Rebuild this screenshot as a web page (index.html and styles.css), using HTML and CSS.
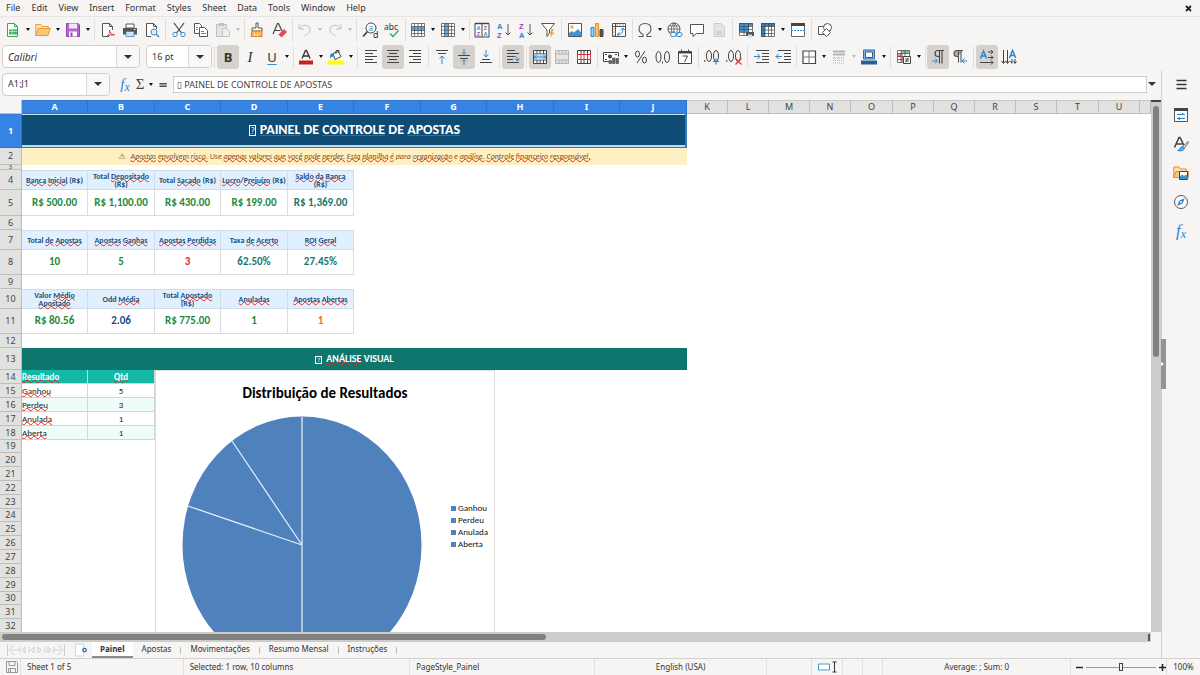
FILE: index.html
```html
<!DOCTYPE html>
<html lang="pt-BR">
<head>
<meta charset="utf-8">
<title>Painel de Controle de Apostas</title>
<link rel="stylesheet" href="styles.css">
</head>
<body>
<header class="top">
  <nav class="menubar" aria-label="Menu">
    <button>File</button><button>Edit</button><button>View</button><button>Insert</button><button>Format</button><button>Styles</button><button>Sheet</button><button>Data</button><button>Tools</button><button>Window</button><button>Help</button>
    <button class="close" aria-label="Close document"><svg width="7" height="7" viewBox="0 0 7 7"><path d="M1 1l5 5M6 1L1 6" stroke="#222" stroke-width="1.8"/></svg></button>
  </nav>

  <div class="toolbar" role="toolbar" aria-label="Standard">
    <button class="tool" aria-label="New"><svg viewBox="0 0 16 16"><path d="M2.500 1.500h7l3 3v10h-10z" fill="#fff" stroke="#3aa655"/><path d="M9.500 1.500v3h3" fill="none" stroke="#3aa655"/><path d="M4 7.500h8v5H4z" fill="#43b15f"/><path d="M4 9.500h8M7 7.500v5" stroke="#d8f0dd" stroke-width=".7"/></svg></button><button class="caret" aria-label="New options"></button>
    <button class="tool" aria-label="Open"><svg viewBox="0 0 16 16"><path d="M.8 13.500V2.500h5l1.500 2h6v3" fill="#fbe3b8" stroke="#e79a3c"/><path d="M.8 13.500l2.500-7h12l-2.300 7z" fill="#fbc878" stroke="#e79a3c"/></svg></button><button class="caret" aria-label="Open options"></button>
    <button class="tool" aria-label="Save"><svg viewBox="0 0 16 16"><path d="M1.500 1.500h11.500l1.500 1.500v11.500h-13z" fill="#b066c9" stroke="#9243af"/><path d="M4 1.500h8v5H4z" fill="#f3e6f7"/><path d="M4 9.500h8v5H4z" fill="#fff"/><path d="M5.500 10.500h2v4h-2z" fill="#9243af"/></svg></button><button class="caret" aria-label="Save options"></button>
    <span class="sep"></span>
    <button class="tool" aria-label="Export as PDF"><svg viewBox="0 0 16 16"><path d="M9 14.500H2.500v-13h7l3 3V8" fill="#fff" stroke="#555"/><path d="M9.500 1.500v3h3" fill="none" stroke="#555"/><path d="M7 14c3-2 3-4 2.500-6 .5 3 2 4.500 5 5-3-.3-5 0-7.500 1z" fill="none" stroke="#e0313d"/></svg></button>
    <button class="tool" aria-label="Print"><svg viewBox="0 0 16 16"><path d="M4 2h8v4H4z" fill="#fff" stroke="#555"/><path d="M1 6h14v6.500H1z" fill="#555"/><path d="M4 9.500h8v5H4z" fill="#cfe4f6" stroke="#3a83c4" stroke-width=".8"/><path d="M12 7.500h1.500" stroke="#fff"/></svg></button>
    <button class="tool" aria-label="Print preview"><svg viewBox="0 0 16 16"><path d="M7 14.500H2.500v-13h7l3 3V7" fill="#fff" stroke="#555"/><path d="M9.500 1.500v3h3" fill="none" stroke="#555"/><circle cx="10" cy="10" r="3" fill="#d9edfb" stroke="#3d8fd1"/><path d="M12 12l3 3" stroke="#3d8fd1" stroke-width="1.500"/></svg></button>
    <span class="sep"></span>
    <button class="tool" aria-label="Cut"><svg viewBox="0 0 16 16"><path d="M3 1l7.500 10M13 1L5.500 11" stroke="#444" stroke-width="1.200" fill="none"/><circle cx="4" cy="12.500" r="2.200" fill="none" stroke="#3d8fd1"/><circle cx="12" cy="12.500" r="2.200" fill="none" stroke="#3d8fd1"/></svg></button>
    <button class="tool" aria-label="Copy"><svg viewBox="0 0 16 16"><path d="M1.500 1.500h5l2 2v8h-7z" fill="#fff" stroke="#555"/><path d="M6.500 5.500h5l3 3v6h-8z" fill="#fff" stroke="#555"/><path d="M8 9.500h3M8 11.500h5M3 5.500h2M3 7.500h2" stroke="#3d8fd1"/></svg></button>
    <button class="tool off" aria-label="Paste"><svg viewBox="0 0 16 16"><path d="M1.500 2.500h10v12h-10z" fill="#ddd" stroke="#aaa"/><path d="M4 1h5v3H4z" fill="#aaa"/><path d="M7.500 6.500h4l3 3v5h-7z" fill="#eee" stroke="#aaa"/></svg></button><button class="caret off" aria-label="Paste options"></button>
    <span class="sep tight"></span>
    <button class="tool" aria-label="Clone formatting"><svg viewBox="0 0 16 16"><path d="M7 1h2v5h4v3H3V6h4z" fill="#fff" stroke="#555"/><path d="M3 9h10v5.500H2z" fill="#fbb65b" stroke="#d98322"/><path d="M5.500 11.500v3M8.500 11.500v3" stroke="#fff" stroke-width=".8"/></svg></button>
    <button class="tool" aria-label="Clear formatting"><svg viewBox="0 0 16 16"><path d="M2 12L6.500 1.500h1L11 9M3.500 8.500h6" fill="none" stroke="#444" stroke-width="1.200"/><path d="M8 12.500l5-5 2.500 2.500-5 5z" fill="#e84855" stroke="#c62b3a" stroke-width=".7"/></svg></button>
    <span class="sep tight"></span>
    <button class="tool off" aria-label="Undo"><svg viewBox="0 0 16 16"><path d="M2 2v5h5M2.500 6.500C6 1 14 3 13 8.500 12.500 11 10 12 7.500 14" fill="none" stroke="#aaa"/></svg></button><button class="caret off" aria-label="Undo options"></button>
    <button class="tool off" aria-label="Redo"><svg viewBox="0 0 16 16"><path d="M14 2v5H9M13.500 6.500C10 1 2 3 3 8.500 3.500 11 6 12 8.500 14" fill="none" stroke="#aaa"/></svg></button><button class="caret off" aria-label="Redo options"></button>
    <span class="sep"></span>
    <button class="tool" aria-label="Find and replace"><svg viewBox="0 0 16 16"><circle cx="9" cy="6" r="5" fill="#fff" stroke="#444"/><path d="M5.500 9.500L1 14.500" stroke="#444" stroke-width="1.800"/><text x="6.500" y="8.500" font-size="8" fill="#2c86d0">a</text><text x="11" y="15.500" font-size="9" fill="#333">d</text></svg></button>
    <button class="tool" aria-label="Spelling"><svg viewBox="0 0 16 16"><text x="0" y="7.500" font-size="8.500" fill="#333">abc</text><path d="M6 11.500l3 3 5.500-6" fill="none" stroke="#35a556" stroke-width="1.300"/></svg></button>
    <span class="sep tight"></span>
    <button class="tool" aria-label="Row"><svg viewBox="0 0 16 16"><path d="M1.500 1.500h13v13h-13z" fill="#fff"/><path d="M1 4.500h14v4H1z" fill="#59aaea"/><path d="M1.500 1.500h13v13h-13zM1.500 4.500h13M1.500 8.500h13M1.500 11.500h13M4.500 1.500v13M8 1.500v13M11.500 1.500v13" fill="none" stroke="#555" stroke-width=".8"/></svg></button><button class="caret" aria-label="Row options"></button>
    <button class="tool" aria-label="Column"><svg viewBox="0 0 16 16"><path d="M1.500 1.500h13v13h-13z" fill="#fff"/><path d="M4.500 1h4v14h-4z" fill="#59aaea"/><path d="M1.500 1.500h13v13h-13zM1.500 4.500h13M1.500 8h13M1.500 11.500h13M4.500 1.500v13M8.500 1.500v13M11.500 1.500v13" fill="none" stroke="#555" stroke-width=".8"/></svg></button><button class="caret" aria-label="Column options"></button>
    <span class="sep tight"></span>
    <button class="tool" aria-label="Sort"><svg viewBox="0 0 16 16"><path d="M1 1.500h14v13.500H1zM8 1v14" fill="#fff" stroke="#444"/><path d="M1 1.500h14" stroke="#444" stroke-width="1.500"/><g class="az" font-size="5.500"><text x="2.600" y="8" fill="#2c86d0">A</text><text x="2.800" y="14.400" fill="#a43dbb">Z</text><text x="9.800" y="8" fill="#a43dbb">Z</text><text x="9.600" y="14.400" fill="#2c86d0">A</text></g></svg></button>
    <button class="tool" aria-label="Sort ascending"><svg viewBox="0 0 16 16"><g class="az" font-size="7.500"><text x="1" y="6.500" fill="#2c86d0">A</text><text x="1" y="15.500" fill="#a43dbb">Z</text></g><path d="M12 2v11M9.500 10.500L12 13l2.500-2.500" fill="none" stroke="#555"/></svg></button>
    <button class="tool" aria-label="Sort descending"><svg viewBox="0 0 16 16"><g class="az" font-size="7.500"><text x="1" y="6.500" fill="#a43dbb">Z</text><text x="1" y="15.500" fill="#2c86d0">A</text></g><path d="M12 2v11M9.500 10.500L12 13l2.500-2.500" fill="none" stroke="#555"/></svg></button>
    <button class="tool" aria-label="AutoFilter"><svg viewBox="0 0 16 16"><path d="M1.500 1.500h13L9.500 8v3L7 14.500V8z" fill="#fff" stroke="#555"/><path d="M12 7l-3 5h2l-1 3.500 4.500-5H12l2-3.500z" fill="#f5a23b"/></svg></button>
    <span class="sep"></span>
    <button class="tool" aria-label="Insert image"><svg viewBox="0 0 16 16"><path d="M1.500 1.500h13v13h-13z" fill="#fff" stroke="#555"/><circle cx="5" cy="5" r="1.700" fill="#f5b04b"/><path d="M2 14v-3l3-2 2 1.500L11 7l3.500 4v3z" fill="#3d94d8"/></svg></button>
    <button class="tool" aria-label="Insert chart"><svg viewBox="0 0 16 16"><path d="M2 5.500h3v9H2z" fill="#9fd0f5" stroke="#2c86d0"/><path d="M6.500 1.500h3v13h-3z" fill="#fbc56f" stroke="#e2912b"/><path d="M11 7.500h3v7h-3z" fill="#555" stroke="#444"/></svg></button>
    <button class="tool" aria-label="Insert pivot table"><svg viewBox="0 0 16 16"><path d="M1.500 1.500h13v13h-13zM1.500 4.500h13M4.500 1.500v13" fill="#fff" stroke="#555"/><path d="M6 2.500v1M9 2.500v1M12 2.500v1M2.500 7h1M2.500 10h1M2.500 13h1" stroke="#555"/><path d="M6.500 12.500c4 0 5.500-2 5.500-6M9.500 8l2.500-2 2 2.500M8.500 10.500l-2.500 2 2 1.500" fill="none" stroke="#2c86d0"/></svg></button>
    <span class="sep tight"></span>
    <button class="tool" aria-label="Special character"><svg viewBox="0 0 16 16"><path d="M1.500 14.500h4.500v-2C3 11 2 9 2 7c0-3.500 2.500-5.500 6-5.500S14 3.500 14 7c0 2-1 4-4 5.500v2h4.500" fill="none" stroke="#555" stroke-width="1.100"/></svg></button><button class="caret" aria-label="Character options"></button>
    <button class="tool" aria-label="Hyperlink"><svg viewBox="0 0 16 16"><circle cx="7" cy="7" r="6" fill="#fff" stroke="#555"/><path d="M1 7h12M7 1v12M2 4h10M2 10h6M7 1C3.500 4 3.500 10 7 13M7 1c3.500 3 3.500 6 3 9" fill="none" stroke="#555" stroke-width=".8"/><rect x="3.500" y="10.500" width="6" height="4" rx="2" fill="#fff" stroke="#2c86d0"/><rect x="9" y="10.500" width="6" height="4" rx="2" fill="none" stroke="#2c86d0"/></svg></button>
    <button class="tool" aria-label="Comment"><svg viewBox="0 0 16 16"><path d="M1.500 2.500h13v9H7.500L4 14.500v-3H1.500z" fill="#fff" stroke="#555"/></svg></button>
    <button class="tool off" aria-label="Headers and footers"><svg viewBox="0 0 16 16"><path d="M3 1.500h7l3.500 3.500v9.500H3z" fill="#ddd" stroke="#bbb"/><path d="M5 10h6M5 12h6" stroke="#aaa"/></svg></button>
    <span class="sep"></span>
    <button class="tool" aria-label="Print area"><svg viewBox="0 0 16 16"><path d="M1.500 1.500h13v12h-13z" fill="#fff"/><path d="M1 1h14v3H1zM1 4h10v6H1z" fill="#3d94d8"/><path d="M1.500 1.500h13v12h-13zM1.500 4.500h13M1.500 7.500h13M1.500 10.500h13M6 1.500v12M10.500 1.500v12" fill="none" stroke="#444" stroke-width=".7"/><path d="M8 10h8v4H8z" fill="#555"/><path d="M10 12.500h4v3h-4z" fill="#bfe0f8"/></svg></button>
    <button class="tool" aria-label="Freeze rows and columns"><svg viewBox="0 0 16 16"><path d="M1.500 1.500h13v13h-13z" fill="#fff"/><path d="M1 1h4v14H1zM1 1h14v3.500H1z" fill="#2c86d0"/><path d="M1.500 1.500h13v13h-13zM1.500 4.500h13M1.500 8h13M1.500 11.500h13M5 1.500v13M8.500 1.500v13M11.500 1.500v13" fill="none" stroke="#444" stroke-width=".7"/></svg></button><button class="caret" aria-label="Freeze options"></button>
    <button class="tool" aria-label="Split window"><svg viewBox="0 0 16 16"><path d="M1.500 1.500h13v13h-13z" fill="#fff" stroke="#666"/><path d="M1 2.500h14" stroke="#444" stroke-width="3"/><path d="M1 8.500h14" stroke="#2c86d0" stroke-dasharray="2 1"/></svg></button>
    <span class="sep"></span>
    <button class="tool" aria-label="Draw functions"><svg viewBox="0 0 16 16"><path d="M1.500 4.500h7v8h-7z" fill="#fff" stroke="#555"/><circle cx="10.500" cy="5.500" r="4" fill="#fff" stroke="#555"/><path d="M9.500 6.500l4 4-4 4-4-4z" fill="#fff" stroke="#555"/></svg></button>
  </div>

  <div class="toolbar" role="toolbar" aria-label="Formatting">
    <div class="combo combo-font"><input type="text" value="Calibri" aria-label="Font name"><button aria-label="Font list"></button></div>
    <div class="combo combo-size"><input type="text" value="16 pt" aria-label="Font size"><button aria-label="Size list"></button></div>
    <span class="sep"></span>
    <button class="tool on glyph bold">B</button>
    <button class="tool glyph ital">I</button>
    <button class="tool glyph under">U</button><button class="caret" aria-label="Underline options"></button>
    <span class="sep tight"></span>
    <button class="tool" aria-label="Font color"><svg viewBox="0 0 16 16"><path d="M4 9.500L7.500 1.500h1l3.500 8M5.500 7h5" fill="none" stroke="#333" stroke-width="1.300"/><path d="M1 11.500h14v4H1z" fill="#c9211e"/></svg></button><button class="caret" aria-label="Font color options"></button>
    <button class="tool" aria-label="Highlighting"><svg viewBox="0 0 16 16"><path d="M5 4.500l5-2 3 5-6 3z" fill="#fff" stroke="#444"/><path d="M8 5V1.500h3V4" fill="none" stroke="#444"/><path d="M5 4.500C2 4 2 6 2.500 9.500 3.500 8 4.500 7 6.500 8z" fill="#2c86d0"/><path d="M0 11.500h16v4H0z" fill="#ffff00"/></svg></button><button class="caret" aria-label="Highlighting options"></button>
    <span class="sep"></span>
    <button class="tool" aria-label="Align left"><svg viewBox="0 0 16 16"><path d="M2 1.500h12M2 4.500h8M2 7.500h12M2 10.500h8M2 13.500h12" stroke="#444"/></svg></button>
    <button class="tool on" aria-label="Center"><svg viewBox="0 0 16 16"><path d="M2 1.500h12M4 4.500h8M2 7.500h12M4 10.500h8M2 13.500h12" stroke="#444"/></svg></button>
    <button class="tool" aria-label="Align right"><svg viewBox="0 0 16 16"><path d="M2 1.500h12M6 4.500h8M2 7.500h12M6 10.500h8M2 13.500h12" stroke="#444"/></svg></button>
    <span class="sep"></span>
    <button class="tool" aria-label="Align top"><svg viewBox="0 0 16 16"><path d="M2 1.500h12M4 4.500h8" stroke="#444"/><path d="M8 15V7M5.500 9.500L8 7l2.500 2.500" fill="none" stroke="#2c86d0"/></svg></button>
    <button class="tool on" aria-label="Center vertically"><svg viewBox="0 0 16 16"><path d="M2 6.500h12M4 9.500h8" stroke="#444"/><path d="M8 0v5M6 3.500L8 5.500l2-2M8 16v-5M6 12.500l2-2 2 2" fill="none" stroke="#2c86d0"/></svg></button>
    <button class="tool" aria-label="Align bottom"><svg viewBox="0 0 16 16"><path d="M4 10.500h8M2 13.500h12" stroke="#444"/><path d="M8 1v7M5.500 5.500L8 8l2.500-2.500" fill="none" stroke="#2c86d0"/></svg></button>
    <span class="sep"></span>
    <button class="tool on" aria-label="Wrap text"><svg viewBox="0 0 16 16"><path d="M2 1.500h8M2 4.500h12M2 7.500h8M2 10.500h6M2 13.500h12" stroke="#444"/><path d="M9 7.500c3 0 3.500 1 3.500 4M10 9.500l2.500 2.500 2-2.500" fill="none" stroke="#2c86d0"/></svg></button>
    <span class="sep"></span>
    <button class="tool on" aria-label="Merge and center"><svg viewBox="0 0 16 16"><path d="M1.500 1.500h13v13h-13zM1.500 5h13M1.500 11h13M5 1.500V5M8 1.500V5M11.500 1.500V5M5 11v3.500M8 11v3.500M11.500 11v3.500" fill="#fff" stroke="#444"/><path d="M2 5.500h12v5H2z" fill="#bfe0f8"/><path d="M2 8h12M4.500 6L2.500 8l2 2M11.500 6l2 2-2 2" fill="none" stroke="#2c86d0"/></svg></button>
    <button class="tool off" aria-label="Merge cells"><svg viewBox="0 0 16 16"><path d="M1.500 1.500h13v13h-13zM1.500 5h13M1.500 11h13M5 1.500V5M8 1.500V5M11.500 1.500V5M5 11v3.500M8 11v3.500M11.500 11v3.500" fill="#ddd" stroke="#999"/></svg></button>
    <button class="tool" aria-label="Unmerge cells"><svg viewBox="0 0 16 16"><path d="M1.500 1.500h13v13h-13zM5 1.500v13M8 1.500v13M11.500 1.500v13" fill="#fff" stroke="#444"/><path d="M1.500 5.500h13v5h-13zM5 5.500v5M8 5.500v5M11.500 5.500v5" fill="#fff" stroke="#e0313d"/></svg></button>
    <span class="sep"></span>
    <button class="tool" aria-label="Currency"><svg viewBox="0 0 16 16"><path d="M7 12.500H.5v-9h15v4" fill="#fff" stroke="#444"/><circle cx="7" cy="7.500" r="2" fill="#444"/><path d="M2 5.500h2M2 10.500h2M12 5.500h2" stroke="#444"/><path d="M6 14.500v-3h2.500v3zM9.500 14.500V9H12v5.500zM13 14.500v-5h2.500v5z" fill="#666" stroke="#444" stroke-width=".6"/></svg></button><button class="caret" aria-label="Currency options"></button>
    <button class="tool" aria-label="Percent"><svg viewBox="0 0 16 16"><ellipse cx="4.500" cy="5" rx="2" ry="3" fill="none" stroke="#444"/><ellipse cx="11.500" cy="11" rx="2" ry="3" fill="none" stroke="#444"/><path d="M12 2L4 14" stroke="#444"/></svg></button>
    <button class="tool" aria-label="Number"><svg viewBox="0 0 16 16"><ellipse cx="3.500" cy="8" rx="2.500" ry="5.500" fill="none" stroke="#444"/><ellipse cx="12" cy="8" rx="2.500" ry="5.500" fill="none" stroke="#444"/><path d="M7.500 12.500v2" stroke="#444"/></svg></button>
    <button class="tool" aria-label="Date"><svg viewBox="0 0 16 16"><path d="M1.500 2.500h13v12h-13z" fill="#fff" stroke="#444"/><path d="M1.500 3.500h13" stroke="#444" stroke-width="2"/><path d="M4.500 .5v3M11.500 .5v3M5.500 7h5l-3 6" fill="none" stroke="#444"/></svg></button>
    <span class="sep"></span>
    <button class="tool" aria-label="Add decimal place"><svg viewBox="0 0 16 16"><path d="M.8 11v2" stroke="#444"/><ellipse cx="5" cy="7" rx="2.500" ry="5.500" fill="none" stroke="#444"/><ellipse cx="12" cy="7" rx="2.500" ry="5.500" fill="none" stroke="#444"/><path d="M9 12.500h6M12 9.500v6" stroke="#2c86d0" stroke-width="1.200"/></svg></button>
    <button class="tool" aria-label="Delete decimal place"><svg viewBox="0 0 16 16"><path d="M.8 11v2" stroke="#444"/><ellipse cx="5" cy="7" rx="2.500" ry="5.500" fill="none" stroke="#444"/><ellipse cx="12" cy="7" rx="2.500" ry="5.500" fill="none" stroke="#444"/><path d="M9.500 9.500l6 6M15.500 9.500l-6 6" stroke="#e0313d" stroke-width="1.200"/></svg></button>
    <span class="sep"></span>
    <button class="tool" aria-label="Increase indent"><svg viewBox="0 0 16 16"><path d="M3 1.500h13M9 4.500h7M9 7.500h7M9 10.500h7M3 13.500h13" stroke="#444"/><path d="M1 7.500h6M4.500 5L7 7.500 4.500 10" fill="none" stroke="#2c86d0"/></svg></button>
    <button class="tool" aria-label="Decrease indent"><svg viewBox="0 0 16 16"><path d="M3 1.500h13M9 4.500h7M9 7.500h7M9 10.500h7M3 13.500h13" stroke="#444"/><path d="M1 7.500h6M3.500 5L1 7.500 3.500 10" fill="none" stroke="#2c86d0"/></svg></button>
    <span class="sep tight"></span>
    <button class="tool" aria-label="Borders"><svg viewBox="0 0 16 16"><path d="M2 2h12.500v12.500H2z" fill="#fff" stroke="#444" stroke-width="1.200"/><path d="M8 2v12.500M2 8h12.500" stroke="#777"/></svg></button><button class="caret" aria-label="Border options"></button>
    <button class="tool off" aria-label="Border style"><svg viewBox="0 0 16 16"><path d="M2 2.500h12M2 5.500h12" stroke="#999" stroke-width="2"/><path d="M2 9h12" stroke="#999" stroke-dasharray="3 1"/><path d="M2 11.500h12M2 14h12" stroke="#999" stroke-dasharray="1 1"/></svg></button><button class="caret off" aria-label="Border style options"></button>
    <button class="tool" aria-label="Border color"><svg viewBox="0 0 16 16"><path d="M2.500 1h11v9h-11z" fill="#7fb9ea" stroke="#2c6fb0"/><path d="M4.500 3h7v5.500h-7z" fill="#fff" stroke="#555"/><path d="M0 11.500h16v4H0z" fill="#2a6099"/></svg></button><button class="caret" aria-label="Border color options"></button>
    <span class="sep"></span>
    <button class="tool" aria-label="Conditional formatting"><svg viewBox="0 0 16 16"><path d="M1.500 1.500h12v12h-12z" fill="#fff"/><path d="M5 1.500h8.500v3H5z" fill="#6fcf84"/><path d="M1.500 5H7v3H1.500zM5 8h3v5H5z" fill="#f08a90"/><path d="M1.500 1.500h12v12h-12zM1.500 4.500h12M1.500 7.500h12M1.500 10.500h12M5 1.500v12M9 1.500v12" fill="none" stroke="#444" stroke-width=".7"/><path d="M7.500 7.500h7v7h-7z" fill="#fff" stroke="#444"/><path d="M9 10h4M9 12h4M12 8.800l-2 4.500" stroke="#444" stroke-width=".9"/></svg></button><button class="caret" aria-label="Conditional options"></button>
    <span class="sep tight"></span>
    <button class="tool on" aria-label="Left-to-right"><svg viewBox="0 0 16 16"><path d="M14 1.500H8a3 3 0 000 6h1M9.500 1.500v13M12 1.500v13" fill="none" stroke="#444" stroke-width="1.100"/><path d="M2 12h5M5 9.500L7.500 12 5 14.500" fill="none" stroke="#2c86d0"/></svg></button>
    <button class="tool" aria-label="Right-to-left"><svg viewBox="0 0 16 16"><path d="M10.500 1.500H5a3 3 0 000 6h1z" fill="#aaa"/><path d="M11 1.500H5a3 3 0 000 6h1M6.500 1.500v12M9 1.500v12" fill="none" stroke="#555" stroke-width="1.100"/><path d="M10 12h5M12.500 9.500L10 12l2.500 2.500" fill="none" stroke="#2c86d0"/></svg></button>
    <span class="sep"></span>
    <button class="tool on" aria-label="Text direction left to right"><svg viewBox="0 0 16 16"><path d="M1.500 9.500L4.500 2l3.200 7.500M2.500 7h4.200" fill="none" stroke="#2c86d0" stroke-width="1.500"/><path d="M9 3h5M9 8.500h5M1 13.500h13M12 1l2 2-2 2M12 6.500l2 2-2 2M12 11.500l2 2-2 2" fill="none" stroke="#444"/></svg></button>
    <button class="tool" aria-label="Text direction top to bottom"><svg viewBox="0 0 16 16"><path d="M8.500 9L11.500 1.500 14.700 9M9.500 6.500h4.200" fill="none" stroke="#2c86d0" stroke-width="1.500"/><path d="M2.500 1v13M6.500 1v13M11 10v4M14 10v4M.5 12l2 2.500L4.500 12M5 12l1.500 2.500L8.500 12M9.500 12l1.500 2.500M12.500 12l1.500 2.500 1.500-2" fill="none" stroke="#444"/></svg></button>
  </div>
</header>

<div class="work">
  <main class="sheet-area">
    <div class="formula-bar">
      <div class="combo combo-name"><input type="text" value="A1:J1" aria-label="Name box"><button aria-label="Name list"></button></div>
      <div class="formula-tools">
        <button class="fx" aria-label="Function wizard">f<sub>x</sub></button>
        <button class="sigma" aria-label="Select function">Σ</button><button class="caret" aria-label="Function list"></button>
        <button class="equals" aria-label="Formula">=</button>
      </div>
      <input class="formula" type="text" value="▯ PAINEL DE CONTROLE DE APOSTAS" aria-label="Formula input">
      <button class="expand" aria-label="Expand formula bar"></button>
    </div>

    <div class="grid-row">
      <div class="grid">
        <table>
          <colgroup><col class="c-num"><col class="c66"><col class="c67"><col class="c66"><col class="c67"><col class="c66"><col class="c67"><col class="c66"><col class="c67"><col class="c66"><col class="c67"><col class="c41"><col class="c41"><col class="c41"><col class="c41"><col class="c42"><col class="c41"><col class="c41"><col class="c41"><col class="c41"><col class="c42"><col class="c41"><col></colgroup>
          <thead><tr><th></th><th class="sel">A</th><th class="sel">B</th><th class="sel">C</th><th class="sel">D</th><th class="sel">E</th><th class="sel">F</th><th class="sel">G</th><th class="sel">H</th><th class="sel">I</th><th class="sel">J</th><th>K</th><th>L</th><th>M</th><th>N</th><th>O</th><th>P</th><th>Q</th><th>R</th><th>S</th><th>T</th><th>U</th><th></th></tr></thead>
          <tbody>
            <tr class="h34"><th class="sel">1</th><td class="title" colspan="10"><span class="tofu">?</span> <u>PAINEL</u> DE <u>CONTROLE</u> DE <u>APOSTAS</u></td><td colspan="12"></td></tr>
            <tr class="h17"><th>2</th><td class="warning" colspan="10"><span class="warn-sign">⚠</span> <u>Apostas</u> <u>envolvem</u> <u>risco.</u> Use <u>apenas</u> <u>valores</u> <u>que</u> <u>você</u> <u>pode</u> <u>perder.</u> <u>Esta</u> <u>planilha</u> <u>é</u> para <u>organização</u> e <u>análise.</u> <u>Controle</u> <u>financeiro</u> <u>responsável.</u></td><td colspan="12"></td></tr>
            <tr class="h5"><th><div>3</div></th><td colspan="22"></td></tr>
            <tr class="h20 labels"><th>4</th><td><u>Banca</u> <u>Inicial</u> (R$)</td><td>Total <u>Depositado</u><br>(R$)</td><td>Total <u>Sacado</u> (R$)</td><td><u>Lucro</u>/<u>Prejuízo</u> (R$)</td><td><u>Saldo</u> <u>da</u> <u>Banca</u><br>(R$)</td></tr>
            <tr class="h26 values"><th>5</th><td>R$ 500.00</td><td>R$ 1,100.00</td><td>R$ 430.00</td><td>R$ 199.00</td><td class="teal">R$ 1,369.00</td></tr>
            <tr class="h14"><th>6</th><td colspan="22"></td></tr>
            <tr class="h20 labels"><th>7</th><td>Total <u>de</u> <u>Apostas</u></td><td><u>Apostas</u> <u>Ganhas</u></td><td><u>Apostas</u> <u>Perdidas</u></td><td>Taxa <u>de</u> <u>Acerto</u></td><td><u>ROI</u> <u>Geral</u></td></tr>
            <tr class="h25 values"><th>8</th><td>10</td><td>5</td><td class="red">3</td><td class="teal">62.50%</td><td class="teal">27.45%</td></tr>
            <tr class="h14"><th>9</th><td colspan="22"></td></tr>
            <tr class="h20 labels"><th>10</th><td>Valor <u>Médio</u><br><u>Apostado</u></td><td>Odd <u>Média</u></td><td>Total <u>Apostado</u><br>(R$)</td><td><u>Anuladas</u></td><td><u>Apostas</u> <u>Abertas</u></td></tr>
            <tr class="h25 values"><th>11</th><td>R$ 80.56</td><td class="navy">2.06</td><td>R$ 775.00</td><td>1</td><td class="orange">1</td></tr>
            <tr class="h14"><th>12</th><td colspan="22"></td></tr>
            <tr class="h22"><th>13</th><td class="section" colspan="10"><span class="tofu">?</span> <u>ANÁLISE</u> VISUAL</td><td colspan="12"></td></tr>
            <tr class="h14 result-head"><th>14</th><td><u>Resultado</u></td><td><u>Qtd</u></td><td colspan="20"></td></tr>
            <tr class="h14 result"><th>15</th><td><u>Ganhou</u></td><td>5</td></tr>
            <tr class="h14 result alt"><th>16</th><td><u>Perdeu</u></td><td>3</td></tr>
            <tr class="h14 result"><th>17</th><td><u>Anulada</u></td><td>1</td></tr>
            <tr class="h14 result alt"><th>18</th><td><u>Aberta</u></td><td>1</td></tr>
            <tr class="h13"><th>19</th></tr><tr class="h14"><th>20</th></tr><tr class="h14"><th>21</th></tr><tr class="h14"><th>22</th></tr><tr class="h14"><th>23</th></tr><tr class="h13"><th>24</th></tr><tr class="h14"><th>25</th></tr><tr class="h14"><th>26</th></tr><tr class="h14"><th>27</th></tr><tr class="h14"><th>28</th></tr><tr class="h14"><th>29</th></tr><tr class="h13"><th>30</th></tr><tr class="h14"><th>31</th></tr><tr class="h14"><th>32</th></tr>
          </tbody>
        </table>
        <figure class="chart">
          <figcaption>Distribuição de Resultados</figcaption>
          <div class="chart-body">
            <svg class="pie" viewBox="0 0 240 258" width="240" height="258" role="img" aria-label="Pie chart"><ellipse cx="120" cy="129" rx="119.500" ry="128.500" fill="#4f81bd"/><path d="M120 1v256M120 129L6 90M120 129L50 25" stroke="#e3ebf5" stroke-width="1.300"/></svg>
            <ul class="legend"><li>Ganhou</li><li>Perdeu</li><li>Anulada</li><li>Aberta</li></ul>
          </div>
        </figure>
      </div>
      <div class="vscroll"><div class="vthumb"></div></div>
    </div>
    <div class="hscroll"><div class="htrack"><div class="hthumb"></div><div class="hsplit"></div></div></div>

    <nav class="tabs" aria-label="Sheets">
      <button class="tab-nav" aria-label="Scroll sheets"><svg width="60" height="12" viewBox="0 0 60 12"><path d="M1.500 0v12M8 1L3 6l5 5M5 6h9M14 3v6M19 3l-3 3 3 3zM23 3v6M28 3l-3 3 3 3zM32 3l3 3-3 3zM39 3v6M42 3l3 3-3 3zM48 3v6M52 1l5 5-5 5M58.500 0v12M49 6h6" fill="none" stroke="#cfcfcd"/></svg></button>
      <button class="tab-add" aria-label="Add sheet"><svg width="14" height="14" viewBox="0 0 14 14"><path d="M1.500 1h8v12h-8z" fill="#fff" stroke="#d5d5d3"/><circle cx="10.500" cy="7" r="1.700" fill="#fff" stroke="#2668b0" stroke-width="1.300"/></svg></button>
      <button class="tab active">Painel</button><button class="tab">Apostas</button><button class="tab">Movimentações</button><button class="tab">Resumo Mensal</button><button class="tab">Instruções</button>
    </nav>
  </main>

  <aside class="sidebar">
    <button class="menu" aria-label="Sidebar settings"><svg viewBox="0 0 16 16"><path d="M3.500 4.500h10M3.500 8.500h10M3.500 12.500h10" stroke="#333" stroke-width="1.500"/></svg></button>
    <button aria-label="Properties"><svg viewBox="0 0 16 16"><path d="M1.500 1.500h13v13h-13z" fill="#fff" stroke="#555"/><path d="M1 2.500h14" stroke="#444" stroke-width="3"/><path d="M4 7.500h8M4 11.500h8M9 6l2 1.500M7 10l-2 1.500 2 1.500" fill="none" stroke="#2c86d0"/></svg></button>
    <button aria-label="Styles"><svg viewBox="0 0 16 16"><path d="M1.500 11.500L6 1.500h1l4 8M3 8h6.500" fill="none" stroke="#444" stroke-width="1.600"/><path d="M15 5.500L9.500 11l1.500 1.500 4.500-6z" fill="#fff" stroke="#444" stroke-width=".8"/><path d="M9.500 10.500c-3 0-2 4-5 4 4 1 7 0 6.500-2.500z" fill="#59aaea" stroke="#2c86d0"/></svg></button>
    <button aria-label="Gallery"><svg viewBox="0 0 16 16"><path d="M.8 12.500V2h5l1.500 2h6v2.500" fill="#fce0b0" stroke="#e58a2d"/><path d="M.8 12.500L3 6.500h12.500v6z" fill="#fbc878" stroke="#e58a2d"/><path d="M6.500 6.500h8v8h-8z" fill="#fff" stroke="#444"/><path d="M7 14v-3l2.500-1.500L11 11l2-1.500 1.500 1.500v3z" fill="#3d94d8"/></svg></button>
    <button aria-label="Navigator"><svg viewBox="0 0 16 16"><circle cx="8" cy="8" r="6.500" fill="#fff" stroke="#555"/><path d="M12 4L9.500 9.500 4 12l2.500-5.500z" fill="#2c86d0"/><circle cx="8" cy="8" r="1" fill="#fff"/></svg></button>
    <button class="fx side-fx" aria-label="Functions">f<sub>x</sub></button>
    <button class="handle" aria-label="Collapse sidebar"></button>
  </aside>
</div>

<footer class="status">
  <span class="cell"><svg width="12" height="12" viewBox="0 0 12 12"><path d="M.5 .5h10l1 1v10H.5zM3 .5v4h6v-4M2.500 11.500v-4h7v4M4.500 8v3" fill="none" stroke="#999"/></svg></span>
  <span class="cell">Sheet 1 of 5</span>
  <span class="cell">Selected: 1 row, 10 columns</span>
  <span class="cell">PageStyle_Painel</span>
  <span class="cell mid">English (USA)</span>
  <span class="cell"></span>
  <span class="cell mode"><svg width="20" height="12" viewBox="0 0 20 12"><path d="M.5 3h11v6H.5z" fill="#fff" stroke="#3f9fc4"/><path d="M14.500 1h4M16.500 1v10M14.500 11h4" stroke="#333"/></svg></span>
  <span class="cell"></span>
  <span class="cell"></span>
  <span class="cell mid">Average: ; Sum: 0</span>
  <span class="cell zoom"><button aria-label="Zoom out"><svg width="7" height="7" viewBox="0 0 7 7"><path d="M0 3.500h7" stroke="#222" stroke-width="1.500"/></svg></button><input type="range" min="0" max="100" value="50" aria-label="Zoom"><button aria-label="Zoom in"><svg width="7" height="7" viewBox="0 0 7 7"><path d="M0 3.500h7M3.500 0v7" stroke="#222" stroke-width="1.500"/></svg></button></span>
  <span class="cell mid">100%</span>
</footer>
</body>
</html>
```
FILE: styles.css
```css
* { box-sizing: border-box; }

body {
  margin: 0;
  height: 100vh;
  display: flex;
  flex-direction: column;
  overflow: hidden;
  background: #f6f5f4;
  color: #333;
  font-family: "Noto Sans", sans-serif;
  font-size: 9px;
  line-height: 12px;
}

button {
  margin: 0;
  padding: 0;
  border: 0;
  background: none;
  color: inherit;
  font: inherit;
}

input { font: inherit; color: inherit; min-width: 0; }

svg { display: block; overflow: visible; }

/* Menu bar */
.menubar {
  display: flex;
  align-items: center;
  gap: 11px;
  height: 17px;
  padding: 0 8px 0 6px;
  border-bottom: 1px solid #e6e5e3;
}
.close { margin-left: auto; }

/* Toolbars */
.toolbar {
  display: flex;
  align-items: center;
  height: 27px;
  padding: 0 0 2px 2px;
}
.tool {
  flex: none;
  width: 22px;
  height: 24px;
  display: flex;
  align-items: center;
  justify-content: center;
  border-radius: 3px;
}
.tool svg { width: 16px; height: 16px; }
.tool.on { background: #d5d2ce; }
.tool.off { opacity: .7; }
.az { font-family: "Liberation Sans", sans-serif; font-weight: bold; }
.sep {
  flex: none;
  width: 1px;
  height: 22px;
  margin: 0 2px;
  background: #e2e0de;
}
.sep.tight { margin-right: 1px; }
.caret {
  flex: none;
  width: 8px;
  height: 24px;
  display: flex;
  align-items: center;
  justify-content: center;
}
.caret::before, .combo button::before, .expand::before {
  content: "";
  border: solid transparent;
  border-width: 3px 2px 0;
  border-top-color: #111;
}
.caret.off::before { border-top-color: #bbb; }
.glyph { font-size: 13px; }
.bold { font-weight: bold; }
.ital { font-family: "Liberation Serif", serif; font-style: italic; font-size: 15px; }
.under { text-decoration: underline; text-decoration-color: #3d8fd1; text-underline-offset: 2px; }

.combo {
  flex: none;
  display: flex;
  height: 23px;
  border: 1px solid #d0cdca;
  border-radius: 4px;
  background: #fff;
  overflow: hidden;
}
.combo input {
  flex: 1;
  border: 0;
  padding: 0 5px;
  background: none;
  font-size: 9px;
}
.combo button {
  width: 23px;
  display: flex;
  align-items: center;
  justify-content: center;
  border-left: 1px solid #dddbd8;
  background: #f9f8f7;
}
.combo button::before, .expand::before { border-width: 4px 4px 0; border-top-color: #333; }
.combo-font { width: 138px; margin-right: 6px; }
.combo-font input { font-size: 10px; font-style: italic; }
.combo-size { width: 66px; }
.combo-name { width: 108px; }

/* Work area */
.work { flex: 1; display: flex; min-height: 0; }
.sheet-area {
  flex: 1;
  min-width: 0;
  display: flex;
  flex-direction: column;
}
.formula-bar {
  display: flex;
  align-items: center;
  height: 29px;
  padding: 0 4px 3px 2px;
}
.formula-tools {
  display: flex;
  align-items: center;
  width: 63px;
  padding-left: 9px;
}
.fx {
  font-family: "Liberation Serif", serif;
  font-style: italic;
  font-size: 15px;
  color: #2c86d0;
}
.fx sub { font-size: 12px; line-height: 0; vertical-align: -2px; }
.formula-tools .fx { width: 12px; }
.sigma { width: 14px; margin-left: 2px; font-family: "Liberation Serif", serif; font-size: 15px; color: #444; }
.equals { width: 16px; font-size: 15px; font-weight: bold; color: #555; }
.formula {
  flex: 1;
  height: 17px;
  border: 1px solid #d0cecb;
  padding: 0 3px;
  background: #fff;
  color: #444;
}
.expand { width: 10px; display: flex; justify-content: center; }

.grid-row { flex: 1; display: flex; min-height: 0; }
.grid {
  flex: 1;
  position: relative;
  overflow: hidden;
  background: #fff;
  font-family: Carlito, Calibri, Lato, sans-serif;
}
table {
  width: 100%;
  table-layout: fixed;
  border-collapse: separate;
  border-spacing: 0;
}
.c-num { width: 22px; }
.c66 { width: 66px; }
.c67 { width: 67px; }
.c41 { width: 41px; }
.c42 { width: 42px; }
th, td { padding: 0; text-align: center; white-space: nowrap; }
th {
  background: #e1e1e0;
  border-right: 1px solid #bdbdbc;
  border-bottom: 1px solid #bdbdbc;
  color: #444;
  font-family: "Noto Sans", sans-serif;
  font-weight: normal;
  font-size: 9px;
  line-height: 10px;
}
thead th { height: 14px; border-top: 1px solid #c9c9c8; }
thead th:first-child { background: #f6f5f4; border-color: transparent #bdbdbc #bdbdbc transparent; }
th.sel { background: #3584e4; border-color: #2f74c8; color: #fff; font-weight: bold; }
.h34 { height: 34px; }
.h26 { height: 26px; }
.h25 { height: 25px; }
.h22 { height: 22px; }
.h20 { height: 20px; }
.h17 { height: 17px; }
.h14 { height: 14px; }
.h13 { height: 13px; }
.h5 { height: 5px; }
.h5 div { height: 4px; line-height: 4px; font-size: 6px; }

/* Spell-check marks */
u {
  text-decoration: underline wavy #e02b20 1px;
  text-decoration-skip-ink: none;
  text-underline-offset: -1px;
}

.title {
  position: relative;
  padding-bottom: 3px;
  background: #0f4c75;
  color: #fff;
  font-size: 14px;
  font-weight: bold;
}
.title u { text-decoration-style: solid; text-underline-offset: 1px; }
.title::after {
  content: "";
  position: absolute;
  inset: 0;
  border: solid #2f78c4;
  border-width: 0 2px 1px 0;
  box-shadow: inset 0 1px #cfe3f5, inset 0 -2px #b9dcf3;
}
.tofu {
  display: inline-block;
  padding: 0 1px;
  border: 1px solid;
  font-family: "Noto Sans", sans-serif;
  font-size: 8px;
  font-weight: normal;
  line-height: 9px;
}
.section .tofu { font-size: 6px; line-height: 6px; margin-right: 2px; }
.warning { background: #fff0c4; color: #8a4f1b; font-size: 8px; font-style: italic; }
.warn-sign { font-family: "DejaVu Sans", sans-serif; font-style: normal; margin-right: 3px; }
.labels td {
  background: #e0f0ff;
  border: solid #cfdde8;
  border-width: 1px 1px 1px 0;
  color: #1b4f7c;
  font-size: 8px;
  font-weight: bold;
  line-height: 8px;
}
.values td {
  border: solid #dcdcdc;
  border-width: 0 1px 1px 0;
  color: #1e8a3c;
  font-size: 11px;
  font-weight: bold;
}
.values .teal { color: #14786c; }
.values .red { color: #dc2b2b; }
.values .navy { color: #1a4a85; }
.values .orange { color: #d97a14; }
.section { background: #0f766e; color: #fff; font-size: 10px; font-weight: bold; }
.result td, .result-head td {
  border: solid #cfd8d6;
  border-width: 0 1px 1px 0;
  color: #222;
  font-size: 9px;
  line-height: 11px;
}
.result td:nth-child(2), .result-head td:nth-child(2) { text-align: left; }
.result.alt td { background: #effdfa; }
.result-head td { background: #14b8a6; color: #fff; font-weight: bold; }
.result-head td:last-child { background: none; border: 0; }

/* Chart floating over the cells */
.chart {
  position: absolute;
  left: 155px;
  top: 270px;
  width: 340px;
  height: 320px;
  margin: 0;
  padding-top: 12px;
  border: 1px solid #dcdcdc;
  background: #fff;
}
figcaption {
  color: #000;
  font-size: 15px;
  font-weight: bold;
  line-height: 20px;
  text-align: center;
}
.chart-body { display: flex; align-items: center; padding: 13px 0 0 26px; }
.legend {
  margin: 0;
  padding: 0 0 38px 29px;
  list-style: none;
  color: #111;
  font-size: 9px;
  line-height: 12px;
}
.legend li { display: flex; align-items: center; gap: 2px; }
.legend li::before { content: ""; width: 5px; height: 5px; background: #4f81bd; }

/* Scroll bars */
.vscroll {
  width: 10px;
  padding: 4px 2px;
  background: #cccccb;
  border-top: 2px solid #444;
}
.vthumb { height: 48%; border-radius: 3px; background: #80807f; }
.hscroll { height: 10px; padding-right: 10px; }
.htrack {
  display: flex;
  align-items: center;
  justify-content: space-between;
  height: 10px;
  padding: 0 1px 0 2px;
  background: #cccccb;
}
.hthumb { width: 47.4%; height: 6px; border-radius: 3px; background: #80807f; }
.hsplit { width: 2px; height: 7px; background: #555; }

/* Sheet tabs */
.tabs { display: flex; height: 16px; padding-left: 6px; font-size: 8px; }
.tab-nav, .tab-add { display: flex; align-items: center; }
.tab-add { margin: 0 4px 0 8px; }
.tab { position: relative; padding: 0 10px 2px 9px; }
.tab:not(.active)::after {
  content: "";
  position: absolute;
  right: 0;
  top: 5px;
  width: 1px;
  height: 7px;
  background: #bbb;
}
.tab.active { padding: 0 8px; background: #fff; border-bottom: 2px solid #8c8c8b; font-weight: bold; }

/* Sidebar */
.sidebar {
  position: relative;
  width: 39px;
  display: flex;
  flex-direction: column;
  align-items: center;
  gap: 13px;
  padding-top: 5px;
  border-left: 1px solid #d0cecc;
}
.sidebar svg { width: 16px; height: 16px; }
.sidebar .menu { margin-bottom: 2px; }
.side-fx { height: 16px; line-height: 16px; font-size: 17px; }
.handle {
  position: absolute;
  left: -1px;
  top: 268px;
  width: 5px;
  height: 50px;
  background: #949493;
}
.handle::before {
  content: "";
  display: block;
  width: 0;
  border: solid transparent;
  border-width: 2px 0 2px 3px;
  border-left-color: #fff;
}

/* Status bar */
.status {
  display: grid;
  grid-template-columns: 21px 163fr 227fr 185fr 173fr 45px 31px 20px 20px 188fr 96px 33px;
  height: 17px;
  border-top: 1px solid #d3d1cf;
  font-size: 8px;
}
.cell {
  display: flex;
  align-items: center;
  padding-left: 6px;
  border-right: 1px solid #e3e1df;
  white-space: nowrap;
}
.cell.mid { justify-content: center; padding: 0; }
.cell:last-child { border: 0; }
.zoom { gap: 3px; padding-left: 5px; }
.zoom input {
  appearance: none;
  flex: 1;
  margin: 0;
  height: 9px;
  background: linear-gradient(#999, #999) center / 100% 1px no-repeat;
}
.zoom input::-webkit-slider-thumb {
  appearance: none;
  width: 4px;
  height: 8px;
  border: 1px solid #444;
  background: #f6f5f4;
}
```
